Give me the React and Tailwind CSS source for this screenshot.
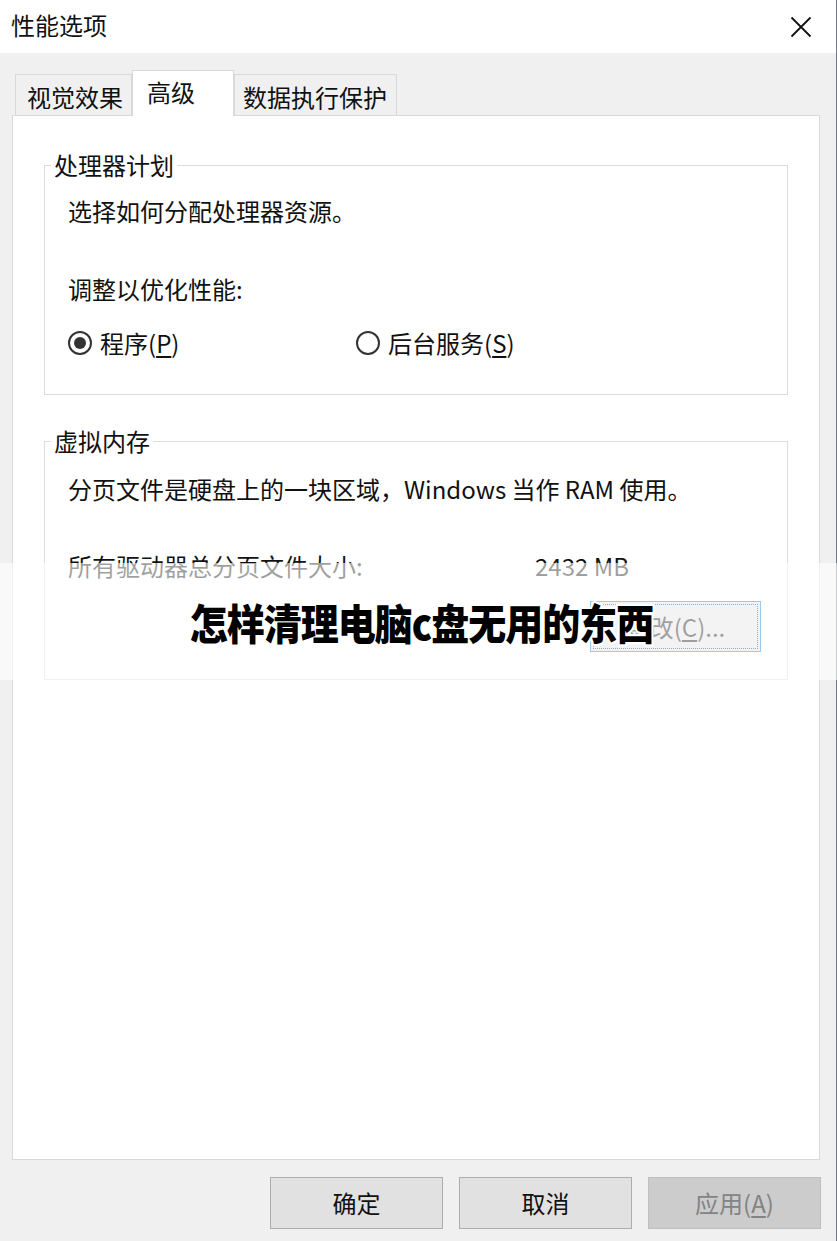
import React from "react";

const FONT = "font-['Microsoft_YaHei','Noto_Sans_CJK_SC','Noto_Sans',sans-serif]";

const Radio = ({ checked, label, hot }) => (
  <div className="flex items-center gap-[8px]">
    <span className="flex h-[24px] w-[24px] items-center justify-center rounded-full border-2 border-[#333]">
      {checked && <span className="h-[12px] w-[12px] rounded-full bg-[#333]" />}
    </span>
    <span>
      {label}(<u className="underline-offset-[3px]">{hot}</u>)
    </span>
  </div>
);

const Tab = ({ children, active, className }) => (
  <div
    className={
      active
        ? "relative z-10 -mb-px flex h-[46px] items-center border border-b-0 border-[#d9d9d9] bg-white " + className
        : "flex h-[41px] items-center border border-b-0 border-[#d9d9d9] bg-[#f0f0f0] pt-[4px] " + className
    }
  >
    {children}
  </div>
);

const Group = ({ title, children, className }) => (
  <fieldset className={"border border-[#dcdcdc] " + className}>
    <legend className="ml-[6px] px-[3px] leading-[26px]">{title}</legend>
    {children}
  </fieldset>
);

const DlgButton = ({ children, disabled }) => (
  <button
    className={
      disabled
        ? "h-[52px] w-[173px] border border-[#bfbfbf] bg-[#cccccc] text-[#838383]"
        : "h-[52px] w-[173px] border border-[#adadad] bg-[#e1e1e1] text-[#111]"
    }
  >
    {children}
  </button>
);

export default function App() {
  return (
    <div className={"relative flex h-[1241px] w-[837px] flex-col overflow-hidden bg-[#f0f0f0] text-[24px] text-[#111] " + FONT}>
      {/* title bar */}
      <div className="flex h-[53px] shrink-0 items-center justify-between bg-white pl-[11px] pr-[24px]">
        <span className="-mt-[3px] text-[24px] leading-none">性能选项</span>
        <svg width="22" height="22" viewBox="0 0 22 22" className="mr-[1px]">
          <path d="M1.5 1.5 L20.5 20.5 M20.5 1.5 L1.5 20.5" stroke="#111" strokeWidth="1.8" fill="none" />
        </svg>
      </div>

      {/* tabs */}
      <div className="mt-[17px] flex items-end pl-[15px]">
        <Tab className="w-[117px] pl-[11px]">视觉效果</Tab>
        <Tab active className="w-[102px] pl-[14px]">
          <span className="-mt-[3px]">高级</span>
        </Tab>
        <Tab className="w-[163px] pl-[8px]">数据执行保护</Tab>
      </div>

      {/* tab panel */}
      <div className="ml-[12px] h-[1045px] w-[808px] border border-[#d9d9d9] bg-white px-[31px] pt-[36px]">
        <Group title="处理器计划" className="pb-[36px]">
          <div className="pl-[23px] leading-[30px]">
            <div className="mt-[18px]">选择如何分配处理器资源。</div>
            <div className="mt-[48px]">调整以优化性能:</div>
            <div className="mt-[24px] flex">
              <div className="w-[288px]">
                <Radio checked label="程序" hot="P" />
              </div>
              <Radio label="后台服务" hot="S" />
            </div>
          </div>
        </Group>

        <Group title="虚拟内存" className="mt-[33px] pb-[27px]">
          <div className="pl-[23px] leading-[30px]">
            <div className="mt-[20px]">分页文件是硬盘上的一块区域，Windows 当作 RAM 使用。</div>
            <div className="mt-[47px] flex">
              <span className="w-[467px]">所有驱动器总分页文件大小:</span>
              <span>2432 MB</span>
            </div>
            <div className="mt-[20px] flex justify-end pr-[26px]">
              <button className="flex h-[51px] w-[171px] items-center justify-center border border-[#0078d7] bg-[#e1e1e1] p-[2px]">
                <span className="flex h-full w-full items-center justify-center border border-dotted border-[#222]">
                  更改(<u className="underline-offset-[3px]">C</u>)...
                </span>
              </button>
            </div>
          </div>
        </Group>
      </div>

      {/* dialog buttons */}
      <div className="mt-[17px] flex justify-end gap-[16px] pr-[16px]">
        <DlgButton>确定</DlgButton>
        <DlgButton>取消</DlgButton>
        <DlgButton disabled>
          应用(<u className="underline-offset-[3px]">A</u>)
        </DlgButton>
      </div>

      {/* window edge */}
      <div className="absolute right-0 top-0 h-full w-px bg-[#6d7a8a]" />

      {/* overlay banner */}
      <div className="absolute left-0 right-0 top-[563px] flex h-[117px] items-center justify-center bg-white/60">
        <span className="pl-[6px] text-[38px] font-black leading-none tracking-[-1px] text-black [-webkit-text-stroke:4px_white] [paint-order:stroke_fill] scale-y-[1.12]">
          怎样清理电脑c盘无用的东西
        </span>
      </div>
    </div>
  );
}
